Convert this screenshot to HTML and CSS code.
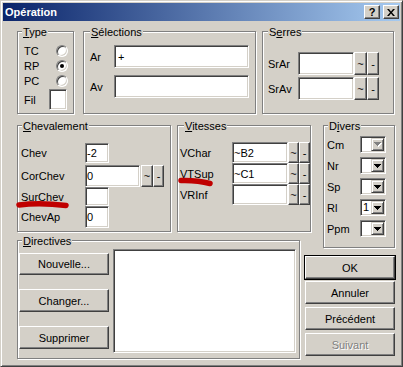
FILE: index.html
```html
<!DOCTYPE html>
<html lang="fr">
<head>
    <meta charset="UTF-8">
    <title>Opération</title>
    <link rel="stylesheet" href="styles.css">
</head>
<body>

    <div class="window">
        <div class="titlebar">
            <span class="title">Opération</span>
            <span class="caption-btns">
                <span class="cbtn help">?</span>
                <span class="cbtn close">
                    <svg width="8" height="7" viewBox="0 0 8 7"><path d="M0 0h2l2 2.4L6 0h2L5 3.5 8 7H6L4 4.6 2 7H0l3-3.5z"/></svg>
                </span>
            </span>
        </div>

        <div class="content">
            <div class="row-top">
                <div class="group g-type">
                    <span class="caption"><u>T</u>ype</span>
                    <div class="radio-row"><span class="lbl">TC</span><span class="radio"></span></div>
                    <div class="radio-row"><span class="lbl">RP</span><span class="radio checked"></span></div>
                    <div class="radio-row"><span class="lbl">PC</span><span class="radio"></span></div>
                    <div class="fil-row"><span class="lbl">Fil</span><span class="edit fil"></span></div>
                </div>

                <div class="group g-sel">
                    <span class="caption"><u>S</u>élections</span>
                    <div class="line"><span class="lbl">Ar</span><span class="edit wide">+</span></div>
                    <div class="line second"><span class="lbl">Av</span><span class="edit wide"></span></div>
                </div>

                <div class="group g-serres">
                    <span class="caption">S<u>e</u>rres</span>
                    <div class="line"><span class="lbl">SrAr</span><span class="edit"></span><span class="btn tilde">~</span><span class="btn minus">-</span></div>
                    <div class="line second"><span class="lbl">SrAv</span><span class="edit"></span><span class="btn tilde">~</span><span class="btn minus">-</span></div>
                </div>
            </div>

            <div class="grid">
                <div class="group g-chev">
                    <span class="caption"><u>C</u>hevalement</span>
                    <div class="line r-chev"><span class="lbl">Chev</span><span class="edit small">-2</span></div>
                    <div class="line r-cor"><span class="lbl">CorChev</span><span class="edit">0</span><span class="btn tilde">~</span><span class="btn minus">-</span></div>
                    <div class="line r-sur"><span class="lbl">SurChev</span><span class="edit small"></span></div>
                    <div class="line r-ap"><span class="lbl">ChevAp</span><span class="edit small">0</span></div>
                </div>

                <div class="group g-vit">
                    <span class="caption"><u>V</u>itesses</span>
                    <div class="line"><span class="lbl">VChar</span><span class="edit">~B2</span><span class="btn tilde">~</span><span class="btn minus">-</span></div>
                    <div class="line"><span class="lbl">VTSup</span><span class="edit">~C1</span><span class="btn tilde">~</span><span class="btn minus">-</span></div>
                    <div class="line"><span class="lbl">VRInf</span><span class="edit"></span><span class="btn tilde">~</span><span class="btn minus">-</span></div>
                </div>

                <div class="group g-div">
                    <span class="caption">D<u>i</u>vers</span>
                    <div class="line"><span class="lbl">Cm</span>
                        <span class="combo"><span class="field"></span><span class="arrow off"><svg width="8" height="5" viewBox="0 0 8 5"><path class="hl" d="M1 1h7v1H1zM2 2h5v1H2zM3 3h3v1H3zM4 4h1v1H4z"/><path d="M0 0h7v1H0zM1 1h5v1H1zM2 2h3v1H2zM3 3h1v1H3z"/></svg></span></span>
                    </div>
                    <div class="line"><span class="lbl">Nr</span>
                        <span class="combo"><span class="field"></span><span class="arrow"><svg width="7" height="4" viewBox="0 0 7 4"><path d="M0 0h7v1H0zM1 1h5v1H1zM2 2h3v1H2zM3 3h1v1H3z"/></svg></span></span>
                    </div>
                    <div class="line"><span class="lbl">Sp</span>
                        <span class="combo"><span class="field"></span><span class="arrow"><svg width="7" height="4" viewBox="0 0 7 4"><path d="M0 0h7v1H0zM1 1h5v1H1zM2 2h3v1H2zM3 3h1v1H3z"/></svg></span></span>
                    </div>
                    <div class="line"><span class="lbl">Rl</span>
                        <span class="combo"><span class="field">1</span><span class="arrow"><svg width="7" height="4" viewBox="0 0 7 4"><path d="M0 0h7v1H0zM1 1h5v1H1zM2 2h3v1H2zM3 3h1v1H3z"/></svg></span></span>
                    </div>
                    <div class="line"><span class="lbl">Ppm</span>
                        <span class="combo"><span class="field"></span><span class="arrow"><svg width="7" height="4" viewBox="0 0 7 4"><path d="M0 0h7v1H0zM1 1h5v1H1zM2 2h3v1H2zM3 3h1v1H3z"/></svg></span></span>
                    </div>
                </div>

                <div class="group g-dir">
                    <span class="caption"><u>D</u>irectives</span>
                    <div class="dir-btns">
                        <span class="btn push b-new">Nouvelle...</span>
                        <span class="btn push">Changer...</span>
                        <span class="btn push">Supprimer</span>
                    </div>
                    <div class="edit listbox"></div>
                </div>

                <div class="side">
                    <span class="btn push default">OK</span>
                    <span class="btn push">Annuler</span>
                    <span class="btn push">Précédent</span>
                    <span class="btn push disabled">Suivant</span>
                </div>
            </div>
        </div>
    </div>

    <!-- traits rouges ajoutés sur la capture -->
    <svg class="marks" width="403" height="367" viewBox="0 0 403 367">
        <path d="M19 205 Q 40 202.5 66 205.5" />
        <path d="M181 180.5 Q 197 180 210 183.5" />
    </svg>

</body>
</html>
```

FILE: styles.css
```css
/* Reset */
* {
    margin: 0;
    padding: 0;
    box-sizing: border-box;
}

body {
    width: 403px;
    height: 367px;
    overflow: hidden;
    background: #d4d0c8;
    font-family: "Liberation Sans", Arial, sans-serif;
    font-size: 11px;
    color: #000;
}

u {
    text-decoration-thickness: 1px;
    text-underline-offset: 1px;
}

/* Fenêtre */
.window {
    width: 403px;
    height: 367px;
    background: #d4d0c8;
    border: 1px solid;
    border-color: #d4d0c8 #404040 #404040 #d4d0c8;
    box-shadow: inset 1px 1px #fff, inset -1px -1px #808080;
    padding: 2px;
}

.titlebar {
    height: 18px;
    display: flex;
    align-items: center;
    justify-content: space-between;
    padding: 0 1px 0 2px;
    background: linear-gradient(to right, #0a246a, #a6caf0);
}

.title {
    color: #fff;
    font-weight: bold;
    font-size: 11px;
}

.caption-btns {
    display: flex;
    gap: 3px;
}

.cbtn {
    width: 16px;
    height: 14px;
    display: flex;
    align-items: center;
    justify-content: center;
    background: #d4d0c8;
    border: 1px solid;
    border-color: #fff #404040 #404040 #fff;
    box-shadow: inset -1px -1px #808080;
    font-weight: bold;
    font-size: 11px;
    line-height: 1;
}

.content {
    padding: 10px 0 0 14px;
}

/* Cadres */
.group {
    position: relative;
    border: 1px solid #808080;
    box-shadow: inset 1px 1px #fff, 1px 1px #fff;
}

.caption {
    position: absolute;
    top: -6px;
    left: 4px;
    padding: 0 1px;
    line-height: 13px;
    background: #d4d0c8;
    white-space: nowrap;
}

.line {
    display: flex;
    align-items: center;
}

.lbl {
    white-space: nowrap;
}

/* Contrôles */
.edit {
    display: flex;
    align-items: center;
    height: 100%;
    padding-left: 1px;
    background: #fff;
    border: 1px solid;
    border-color: #808080 #fff #fff #808080;
    box-shadow: inset 1px 1px #404040, inset -1px -1px #d4d0c8;
    white-space: nowrap;
}

.btn {
    display: flex;
    align-items: center;
    justify-content: center;
    height: 100%;
    background: #d4d0c8;
    border: 1px solid;
    border-color: #fff #404040 #404040 #fff;
    box-shadow: inset -1px -1px #808080;
    white-space: nowrap;
}

.radio {
    position: relative;
    width: 12px;
    height: 12px;
    border-radius: 50%;
    background: #fff;
    border: 1px solid;
    border-color: #808080 #fff #fff #808080;
    box-shadow: inset 1px 1px #404040, inset -1px -1px #d4d0c8;
}

.radio.checked::after {
    content: "";
    position: absolute;
    left: 3px;
    top: 3px;
    width: 4px;
    height: 4px;
    border-radius: 50%;
    background: #000;
}

/* Type */
.g-type {
    width: 57px;
    padding: 13px 0 0 6px;
}

.radio-row {
    display: flex;
    align-items: center;
    height: 12px;
    margin-bottom: 3px;
}

.g-type .lbl {
    width: 32px;
}

.fil-row {
    display: flex;
    align-items: center;
    height: 21px;
    margin-top: -1px;
}

.fil-row .lbl {
    width: 25px;
}

.fil {
    width: 18px;
}

/* Sélections */
.g-sel {
    width: 173px;
    margin-left: 9px;
    padding: 13px 0 0 6px;
}

.g-sel .caption {
    left: 6px;
}

.g-sel .line {
    height: 23px;
}

.g-sel .line.second {
    margin-top: 7px;
}

.g-sel .lbl {
    width: 24px;
}

.edit.wide {
    width: 135px;
    padding-left: 3px;
}

/* Serres */
.g-serres {
    width: 132px;
    margin-left: 6px;
    padding: 20px 0 0 5px;
}

.g-serres .caption {
    left: 5px;
}

.g-serres .line {
    height: 23px;
}

.g-serres .line.second {
    margin-top: 2px;
}

.g-serres .lbl {
    width: 30px;
}

.g-serres .edit {
    width: 56px;
}

.g-serres .tilde {
    width: 13px;
}

.g-serres .minus {
    width: 12px;
}

.row-top {
    display: flex;
    height: 83px;
}

/* Grille du bas */
.grid {
    display: grid;
    margin-top: 11px;
    grid-template-columns: 154px 6px 123px 5px 6px 12px 72px;
    grid-template-rows: 107px 8px 8px 111px;
}

/* Chevalement */
.g-chev {
    grid-column: 1;
    grid-row: 1;
    padding: 17px 0 0 3px;
}

.g-chev .lbl {
    width: 64px;
}

.r-chev { height: 20px; }
.r-cor { height: 22px; margin-top: 2px; }
.r-sur { height: 19px; }
.r-ap { height: 22px; }

.edit.small {
    width: 24px;
}

.r-cor .edit {
    width: 55px;
}

.r-cor .tilde {
    width: 12px;
    margin-left: 1px;
}

.r-cor .minus {
    width: 11px;
}

/* Vitesses */
.g-vit {
    grid-column: 3 / 6;
    grid-row: 1;
    padding: 16px 0 0 2px;
}

.g-vit .caption {
    left: 6px;
}

.g-vit .line {
    height: 21px;
}

.g-vit .lbl {
    width: 52px;
}

.g-vit .edit {
    width: 56px;
}

.g-vit .tilde,
.g-vit .minus {
    width: 11px;
}

/* Divers */
.g-div {
    grid-column: 7;
    grid-row: 1 / 4;
    padding: 10px 0 0 3px;
}

.g-div .line {
    height: 17px;
    margin-bottom: 4px;
}

.g-div .lbl {
    width: 33px;
}

.combo {
    display: flex;
    width: 26px;
    height: 17px;
    padding: 1px;
    background: #fff;
    border: 1px solid;
    border-color: #808080 #fff #fff #808080;
    box-shadow: inset 1px 1px #404040, inset -1px -1px #d4d0c8;
}

.combo .field {
    flex: 1;
    display: flex;
    align-items: center;
    padding-left: 1px;
    line-height: 1;
}

.combo .arrow {
    width: 13px;
    display: flex;
    align-items: center;
    justify-content: center;
    background: #d4d0c8;
    border: 1px solid;
    border-color: #d4d0c8 #404040 #404040 #d4d0c8;
    box-shadow: inset 1px 1px #fff, inset -1px -1px #808080;
}

.combo .arrow svg {
    fill: #000;
}

.combo .arrow.off svg {
    fill: #808080;
}

.combo .arrow.off .hl {
    fill: #fff;
}

/* Directives */
.g-dir {
    grid-column: 1 / 4;
    grid-row: 3 / 5;
    display: flex;
    padding: 8px 0 0 1px;
}

.dir-btns {
    display: flex;
    flex-direction: column;
    width: 90px;
    margin-top: 4px;
}

.push {
    height: 23px;
}

.dir-btns .b-new {
    height: 22px;
}

.dir-btns .push + .push {
    margin-top: 14px;
}

.listbox {
    width: 183px;
    height: 104px;
    margin-left: 4px;
}

/* Boutons de droite */
.side {
    grid-column: 5 / 8;
    grid-row: 4;
    display: flex;
    flex-direction: column;
    padding-top: 8px;
}

.side .push {
    flex: none;
    margin-top: 3px;
}

.side .push:nth-child(2) {
    margin-top: 2px;
}

.side .default {
    margin-top: 0;
    outline: 1px solid #000;
}

.disabled {
    color: #808080;
    text-shadow: 1px 1px #fff;
}

/* Annotations */
.marks {
    position: absolute;
    top: 0;
    left: 0;
    pointer-events: none;
}

.marks path {
    fill: none;
    stroke: #c00000;
    stroke-width: 5.5;
    stroke-linecap: round;
}
```
